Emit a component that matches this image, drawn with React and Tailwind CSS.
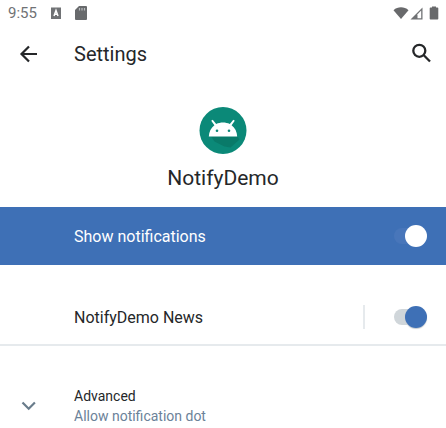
import { useState } from "react";

function StatusBar() {
  return (
    <div className="flex h-[26px] items-center justify-between pl-2 pr-[7px] text-[#707275]">
      <div className="flex items-center">
        <span className="w-[42px] text-[15px] leading-4">9:55</span>
        <svg className="h-[13px] w-3" viewBox="0 0 12 13" aria-hidden="true">
          <rect x="1" y=".5" width="10" height="11.5" fill="#707275" />
          <path d="M4 9 6 3.500 8 9M4.800 7.200h2.400" fill="none" stroke="#fff" strokeWidth="1.5" />
        </svg>
        <svg className="ml-3 h-4 w-[14px]" viewBox="0 0 14 16" aria-hidden="true">
          <path d="M5 1h7a1 1 0 0 1 1 1v12a1 1 0 0 1-1 1H2a1 1 0 0 1-1-1V5z" fill="#686a6c" />
          <path d="M5.500 3v2.500M8 3v2.500M10.500 3v2.500" stroke="#b9bcbf" strokeWidth="1.200" />
        </svg>
      </div>
      <div className="flex items-center">
        <svg className="h-3 w-4" viewBox="0 0 16 12" aria-hidden="true">
          <path d="M.5 3.200C4.800-.6 11.200-.6 15.500 3.200L8 12z" fill="#68696b" />
        </svg>
        <svg className="ml-px h-[13px] w-[13px]" viewBox="0 0 13 13" aria-hidden="true">
          <path d="M.5 12.500 12.500.5v12z" fill="#707275" />
          <path d="M7.500 7.300 11.200 3.500v7.800H7.500z" fill="#fff" />
        </svg>
        <svg className="ml-[6px] h-[14px] w-[10px]" viewBox="0 0 10 14" aria-hidden="true">
          <path d="M3 .5h4v1h1.500a.8.8 0 0 1 .8.8v10.400a.8.8 0 0 1-.8.8h-7a.8.8 0 0 1-.8-.8V2.300a.8.8 0 0 1 .8-.8H3z" fill="#68696b" />
        </svg>
      </div>
    </div>
  );
}

function Toggle({ id, checked, onChange, trackClass, thumbClass }) {
  return (
    <span className="relative flex h-[22px] w-[34px] shrink-0 items-center">
      <span className={`ml-px h-4 w-7 rounded-full ${trackClass}`} />
      <input
        id={id}
        type="checkbox"
        role="switch"
        checked={checked}
        onChange={(event) => onChange(event.target.checked)}
        className={`absolute top-0 h-[22px] w-[22px] cursor-pointer appearance-none rounded-full left-0 checked:left-3 ${thumbClass}`}
      />
    </span>
  );
}

export default function App() {
  const [showAll, setShowAll] = useState(true);
  const [news, setNews] = useState(true);

  return (
    <div className="min-h-screen w-full bg-white font-[Roboto,sans-serif] text-[#252729]">
      <StatusBar />

      <header className="flex h-14 items-center pl-4 pr-3">
        <button type="button" aria-label="Back" className="flex w-[58px] items-center">
          <svg className="h-[26px] w-[26px]" viewBox="0 0 26 26" fill="none" stroke="currentColor" strokeWidth="2.200" aria-hidden="true">
            <path d="M21 13H6M13 5.500 5.500 13l7.500 7.500" />
          </svg>
        </button>
        <h1 className="grow text-[20px] leading-6">Settings</h1>
        <button type="button" aria-label="Search" className="flex">
          <svg className="h-6 w-6" viewBox="0 0 24 24" fill="none" stroke="currentColor" strokeWidth="2.300" aria-hidden="true">
            <circle cx="9.300" cy="8.800" r="6" />
            <path d="m13.800 13.300 6.200 6.200" />
          </svg>
        </button>
      </header>

      <main>
        <section className="flex flex-col items-center pb-[15px] pt-6">
          <svg className="h-12 w-12" viewBox="0 0 48 48" aria-hidden="true">
            <circle cx="24" cy="24.500" r="23.500" fill="#0b8978" />
            <path d="M12 30.500h26.500l2 3-9 8-6-1-10-5z" fill="#08705f" opacity=".6" />
            <path d="M9.800 30.500c.2-4.800 2.200-8.600 5.600-11.300l-3.200-4.400 1.500-1 3.500 4.300c4.200-2 9.400-2 13.600 0l3.500-4.300 1.500 1-3.200 4.400c3.400 2.700 5.400 6.500 5.600 11.300z" fill="#fff" />
            <circle cx="18" cy="24.800" r="1.300" fill="#0b8978" />
            <circle cx="30" cy="24.800" r="1.300" fill="#0b8978" />
          </svg>
          <h2 className="mt-[10px] text-[21px] leading-7">NotifyDemo</h2>
        </section>

        <div className="flex h-[58px] items-center bg-[#3e70b6] pl-[74px] pr-[19px] text-white">
          <label htmlFor="show-notifications" className="grow pt-[2px] text-[16px] leading-6">Show notifications</label>
          <Toggle
            id="show-notifications"
            checked={showAll}
            onChange={setShowAll}
            trackClass="bg-[#4876ba]"
            thumbClass="bg-white"
          />
        </div>

        <div className="border-b-2 border-[#e6eaed] pb-[15px] pl-[74px] pr-[19px] pt-10">
          <div className="flex h-6 items-center">
            <label htmlFor="news" className="grow pt-[2px] text-[16px] leading-6">NotifyDemo News</label>
            <span className="mr-7 h-6 w-[2px] bg-[#e6eaed]" />
            <Toggle
              id="news"
              checked={news}
              onChange={setNews}
              trackClass="bg-[#d0d6da]"
              thumbClass="bg-[#3e70b6] shadow-[0_1px_1px_#c3c9ce]"
            />
          </div>
        </div>

        <button type="button" className="flex w-full items-center pl-4 pt-10 text-left">
          <span className="w-[58px]">
            <svg className="h-[26px] w-[26px]" viewBox="0 0 26 26" fill="none" stroke="#697c8b" strokeWidth="2.200" aria-hidden="true">
              <path d="m6.500 9.500 6.200 6.200 6.200-6.200" />
            </svg>
          </span>
          <span className="flex flex-col">
            <span className="text-[14px] leading-5">Advanced</span>
            <span className="text-[14px] leading-5 text-[#6b8299]">Allow notification dot</span>
          </span>
        </button>
      </main>
    </div>
  );
}
